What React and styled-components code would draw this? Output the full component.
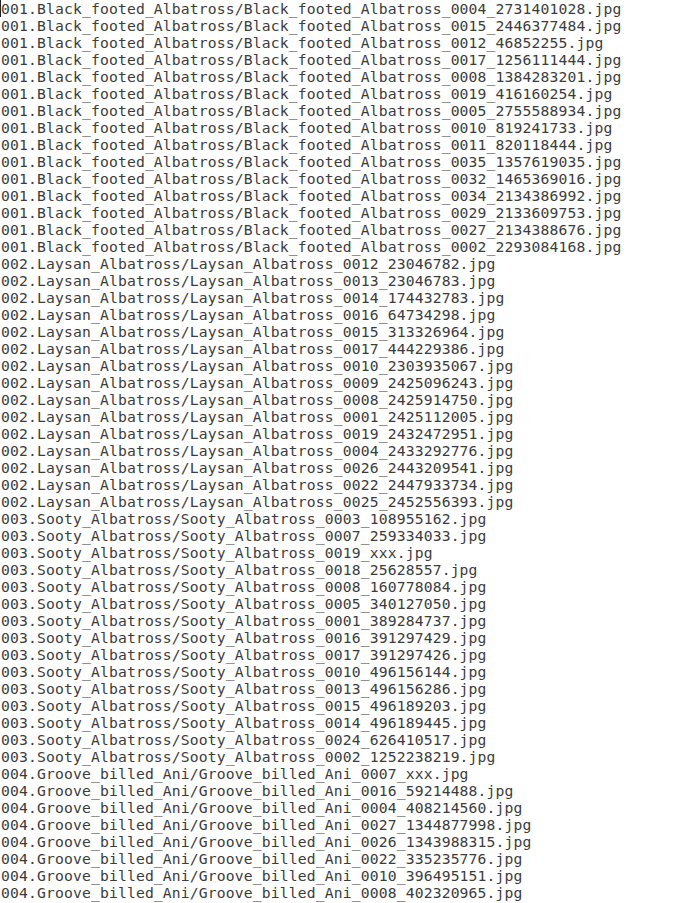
import React from "react";
import styled, { createGlobalStyle } from "styled-components";

const Global = createGlobalStyle`
  html, body { margin: 0; padding: 0; background: #ffffff; }
  body { overflow: hidden; }
`;

const Editor = styled.div`
  position: relative;
  width: 692px;
  height: 903px;
  overflow: hidden;
  background: #ffffff;
  padding-left: 1px;
  box-sizing: border-box;
`;

const Line = styled.div`
  font-family: "DejaVu Sans Mono", "Liberation Mono", monospace;
  font-size: 14.7px;
  letter-spacing: 0.15px;
  line-height: 17px;
  height: 17px;
  color: #3c3c3c;
  white-space: pre;
`;

const Caret = styled.span`
  position: absolute;
  left: 0;
  top: 0;
  width: 1px;
  height: 17px;
  background: #222;
`;

const groups = [
  ["001.Black_footed_Albatross", "Black_footed_Albatross", [
    "0004_2731401028", "0015_2446377484", "0012_46852255", "0017_1256111444",
    "0008_1384283201", "0019_416160254", "0005_2755588934", "0010_819241733",
    "0011_820118444", "0035_1357619035", "0032_1465369016", "0034_2134386992",
    "0029_2133609753", "0027_2134388676", "0002_2293084168",
  ]],
  ["002.Laysan_Albatross", "Laysan_Albatross", [
    "0012_23046782", "0013_23046783", "0014_174432783", "0016_64734298",
    "0015_313326964", "0017_444229386", "0010_2303935067", "0009_2425096243",
    "0008_2425914750", "0001_2425112005", "0019_2432472951", "0004_2433292776",
    "0026_2443209541", "0022_2447933734", "0025_2452556393",
  ]],
  ["003.Sooty_Albatross", "Sooty_Albatross", [
    "0003_108955162", "0007_259334033", "0019_xxx", "0018_25628557",
    "0008_160778084", "0005_340127050", "0001_389284737", "0016_391297429",
    "0017_391297426", "0010_496156144", "0013_496156286", "0015_496189203",
    "0014_496189445", "0024_626410517", "0002_1252238219",
  ]],
  ["004.Groove_billed_Ani", "Groove_billed_Ani", [
    "0007_xxx", "0016_59214488", "0004_408214560", "0027_1344877998",
    "0026_1343988315", "0022_335235776", "0010_396495151", "0008_402320965",
  ]],
];

const lines = groups.flatMap(([dir, name, ids]) =>
  ids.map((id) => `${dir}/${name}_${id}.jpg`)
);

export default function App() {
  return (
    <>
      <Global />
      <Editor>
        <Caret />
        {lines.map((l, i) => (
          <Line key={i}>{l}</Line>
        ))}
      </Editor>
    </>
  );
}
